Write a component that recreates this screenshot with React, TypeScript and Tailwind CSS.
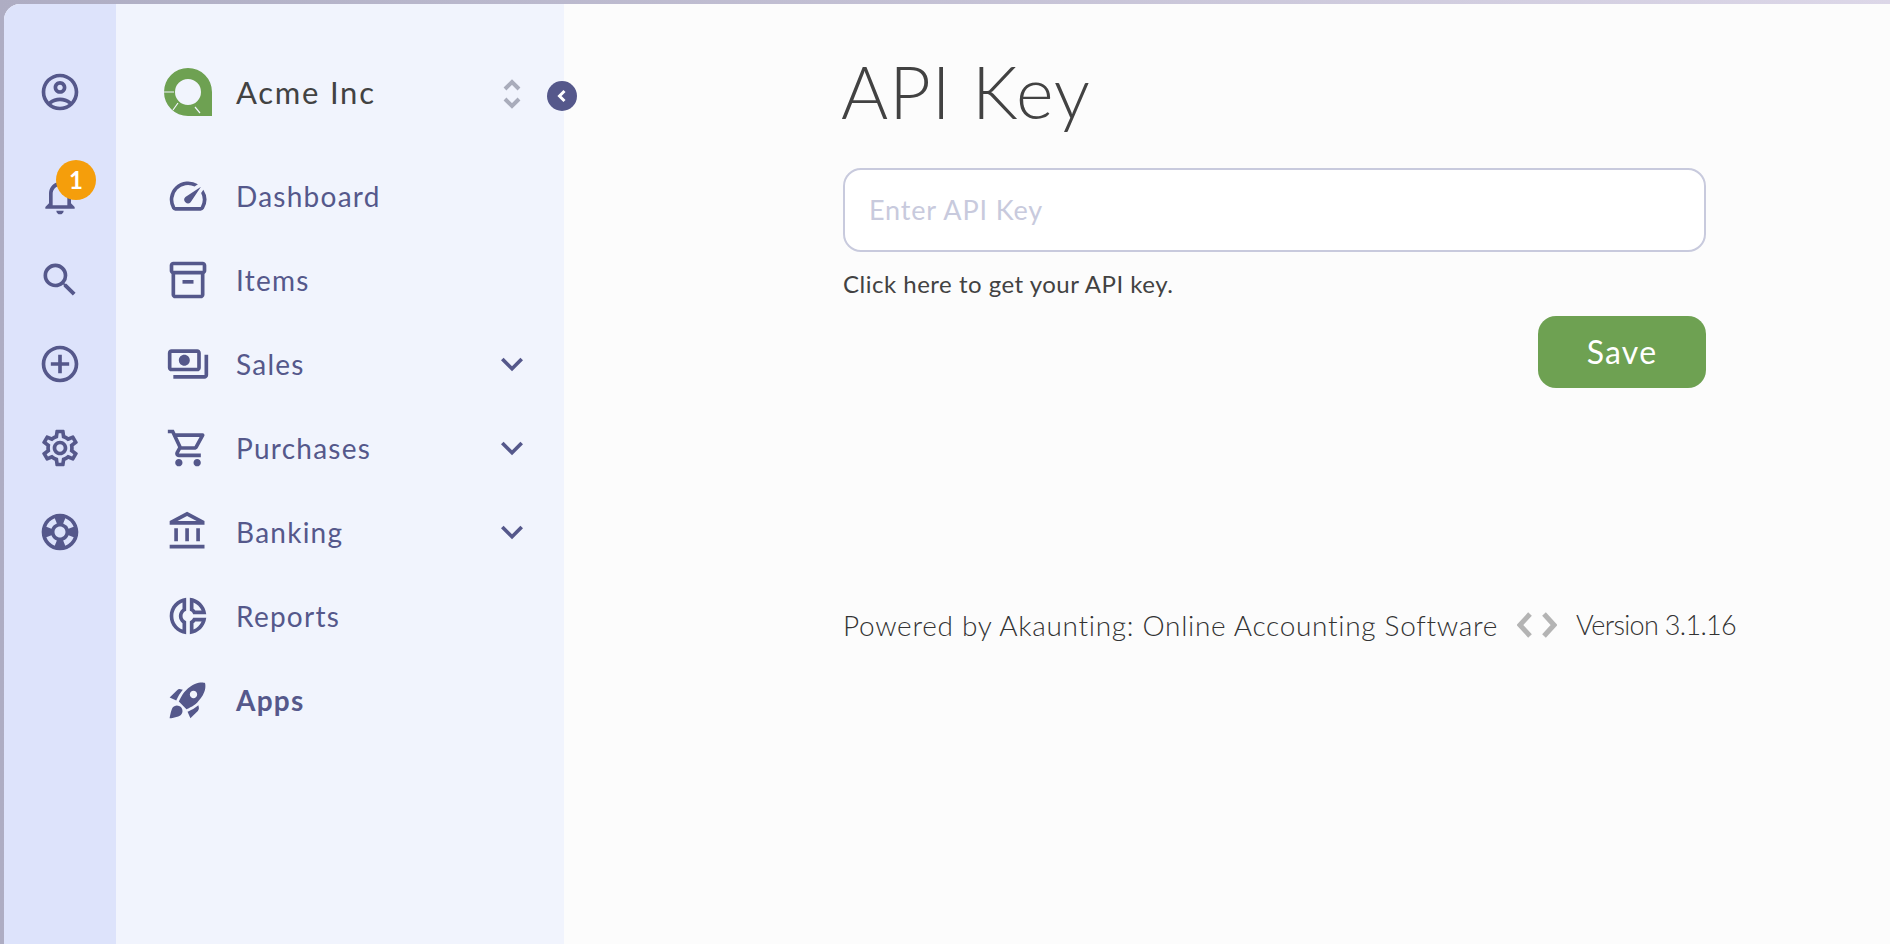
import React from 'react';
import {
  MdExpandMore,
  MdOutlineAccountBalance,
  MdOutlineAccountCircle,
  MdOutlineAddCircleOutline,
  MdOutlineDonutSmall,
  MdOutlineInventory2,
  MdOutlineNotifications,
  MdOutlinePayments,
  MdOutlineSettings,
  MdOutlineShoppingCart,
  MdOutlineSpeed,
  MdRocketLaunch,
  MdSearch,
  MdSupport,
} from 'react-icons/md';

const railIcons = [
  { name: 'profile', icon: MdOutlineAccountCircle },
  { name: 'notifications', icon: MdOutlineNotifications, badge: '1' },
  { name: 'search', icon: MdSearch },
  { name: 'new', icon: MdOutlineAddCircleOutline },
  { name: 'settings', icon: MdOutlineSettings },
  { name: 'support', icon: MdSupport },
];

const navItems = [
  { name: 'Dashboard', icon: MdOutlineSpeed },
  { name: 'Items', icon: MdOutlineInventory2 },
  { name: 'Sales', icon: MdOutlinePayments, sub: true },
  { name: 'Purchases', icon: MdOutlineShoppingCart, sub: true },
  { name: 'Banking', icon: MdOutlineAccountBalance, sub: true },
  { name: 'Reports', icon: MdOutlineDonutSmall },
  { name: 'Apps', icon: MdRocketLaunch, active: true },
];

const Logo = () => (
  <svg width="48" height="48" viewBox="0 0 48 48" fill="#6ea152" className="ml-[2px]">
    <path d="M24 0a24 24 0 0 0 0 48h24V24A24 24 0 0 0 24 0zm0 11a13 13 0 1 1 0 26 13 13 0 0 1 0-26z" fillRule="evenodd" />
    <path d="M0 24h10M9 42l5-7M31 39l5 6" stroke="#f1f4fd" strokeWidth="1.2" />
  </svg>
);

const App: React.FC = () => {
  return (
    <div className="h-screen overflow-hidden bg-linear-to-r from-[#aeadc3] to-[#dcd7e8] pl-1 pt-1 font-['Lato','Open_Sans',sans-serif]">
      <div className="flex h-full overflow-hidden rounded-tl-2xl bg-[#fcfcfc]">
        <div className="flex w-[112px] shrink-0 flex-col items-center bg-[#dde3fb] pt-[46px]">
          {railIcons.map((item, i) => (
            <div key={item.name} className={`relative flex h-[84px] w-[84px] items-center justify-center ${i === 0 ? 'mb-5' : ''}`}>
              <item.icon size={44} className="text-[#55588b]" />
              {item.badge && (
                <span className="absolute left-[38px] top-[6px] flex h-10 w-10 items-center justify-center rounded-full bg-[#f59e0b] text-2xl font-bold text-white">
                  {item.badge}
                </span>
              )}
            </div>
          ))}
        </div>

        <div className="relative w-[448px] shrink-0 bg-[#f1f4fd] pl-[46px] pr-[30px] pt-[46px]">
          <div className="mb-5 flex h-[84px] items-center">
            <Logo />
            <span className="ml-6 flex-1 text-[31px] font-normal tracking-[1.75px] text-[#424242]">Acme Inc</span>
            <svg width="44" height="44" viewBox="0 0 44 44" fill="none" stroke="#a9acbb" strokeWidth="4" className="mt-[3px]">
              <path d="M15 17l7-7 7 7M15 27l7 7 7-7" />
            </svg>
          </div>
          <button className="absolute right-[-13px] top-[77px] flex h-[30px] w-[30px] items-center justify-center rounded-full bg-[#55588b]">
            <svg width="30" height="30" viewBox="0 0 30 30" fill="none" stroke="#ffffff" strokeWidth="3">
              <path d="M17.5 10l-5 5 5 5" />
            </svg>
          </button>
          <ul>
            {navItems.map((item) => (
              <li key={item.name} className="flex h-[84px] items-center text-[#55588b]">
                <item.icon size={44} className="ml-[4px]" />
                <span className={`ml-[26px] flex-1 text-[28px] tracking-[1.25px] ${item.active ? 'font-bold' : 'font-normal'}`}>
                  {item.name}
                </span>
                {item.sub && <MdExpandMore size={44} />}
              </li>
            ))}
          </ul>
        </div>

        <div className="flex-1 pl-[279px] pt-[43px]">
          <div className="w-[863px]">
            <h1 className="-ml-[2px] text-[72px] font-light leading-[88px] tracking-[1px] text-[#424242]">API Key</h1>
            <input
              readOnly
              placeholder="Enter API Key"
              className="mt-[33px] h-[84px] w-full rounded-[18px] border-2 border-[#c8cadd] bg-white px-[24px] pb-[2px] text-[27px] tracking-[0.85px] outline-none placeholder:text-[#c8cadd]"
            />
            <p className="mt-4 text-2xl tracking-[0.5px] text-[#424242]">Click here to get your API key.</p>
            <div className="mt-4 flex justify-end">
              <button className="h-[72px] w-[168px] rounded-[18px] bg-[#6ea152] text-[32px] tracking-[1.2px] text-white">Save</button>
            </div>
          </div>
          <div className="mt-[217px] flex h-10 items-center whitespace-nowrap text-[27px] font-light text-[#333333]">
            <span className="text-[28px] tracking-[0.7px]">Powered by Akaunting: Online Accounting Software</span>
            <svg width="40" height="28" viewBox="0 0 40 28" fill="none" stroke="#b4b4b4" strokeWidth="5" className="mx-[19px]">
              <path d="M13 3 3 14l10 11M27 3l10 11-10 11" />
            </svg>
            <span className="-tracking-[0.67px]">Version 3.1.16</span>
          </div>
        </div>
      </div>
    </div>
  );
};

export default App;
